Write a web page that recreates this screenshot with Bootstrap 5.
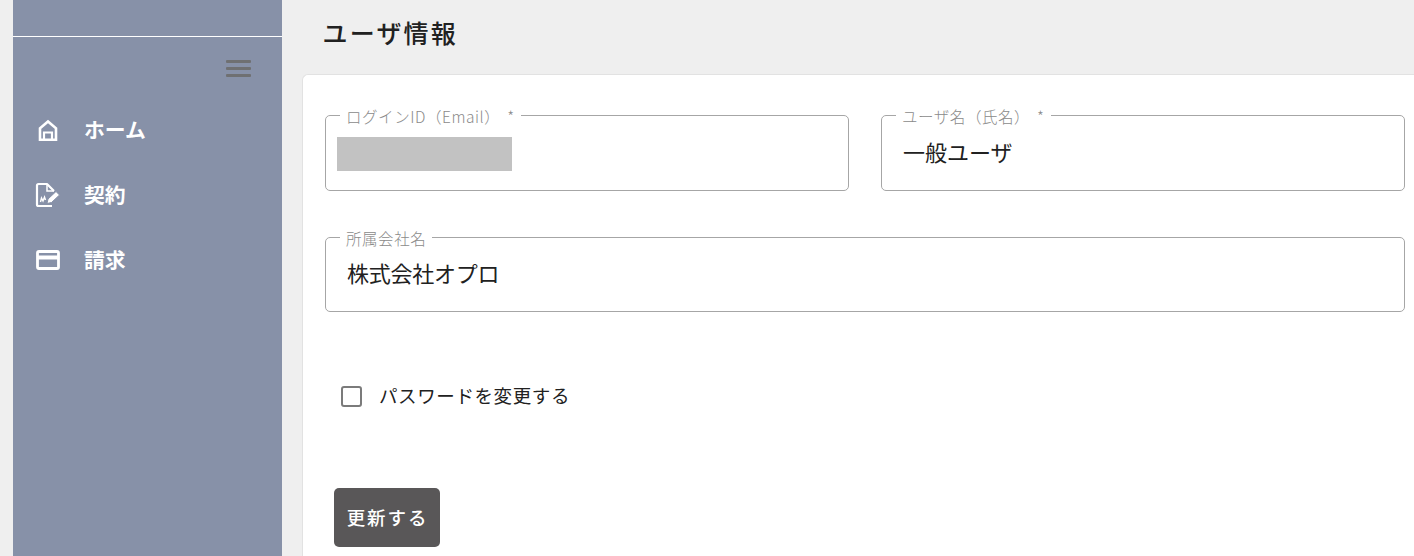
<!DOCTYPE html>
<html lang="ja">
<head>
    <meta charset="UTF-8">
    <meta name="viewport" content="width=device-width, initial-scale=1.0">
    <title>ユーザ情報</title>
    <link href="https://cdn.jsdelivr.net/npm/bootstrap@5.3.0/dist/css/bootstrap.min.css" rel="stylesheet">
    <style>
        html, body { height: 100%; overflow: hidden; }
        body {
            font-family: "Noto Sans CJK JP", "Noto Sans", sans-serif;
            background: #efefef;
            color: #212121;
        }
        .page-wrap { height: 556px; padding-left: 13px; }

        /* sidebar */
        .side-bar { width: 269px; flex: none; background: #8791a8; }
        .side-top { height: 37px; border-bottom: 1px solid #fff; }
        .side-toggle { height: 60px; padding: 23px 31px 0 0; }
        .side-toggle span { display: block; width: 25px; height: 3px; background: #6f7072; margin-bottom: 4px; border-radius: 1px; }
        .side-link { height: 65px; padding-left: 22px; color: #fff; font-weight: 700; font-size: 20.800px; text-decoration: none; }
        .side-link:hover { color: #fff; }
        .side-icon { width: 26px; height: 26px; margin-right: 23px; flex: none; }

        /* main */
        .main-area { min-width: 0; padding-left: 20px; }
        .page-title { height: 74px; margin: 0; padding: 12px 0 0 20.500px; font-size: 25px; font-weight: 500; letter-spacing: 2.200px; line-height: 40px; }
        .form-sheet { height: 500px; background: #fff; border: 1px solid #e2e2e2; border-right: 0; border-radius: 6px 0 0 0; padding: 31px 9px 0 22px; }

        .out-field { margin: 0; padding: 0 21px; border: 1px solid #a6a6a6; border-radius: 5px; min-width: 0; position: relative; }
        .out-field legend { float: none; width: auto; margin: 0 0 0 -1px; padding: 2px 6px 0 0; font-size: 15.500px; font-weight: 300; line-height: 16px; color: #8a8a8a; letter-spacing: .55px; box-shadow: -6px 0 0 #fff; }
        .out-field legend i { font-style: normal; margin-left: 7px; }
        .field-value { height: 66px; font-size: 22px; line-height: 54px; }
        .field-mask { position: absolute; left: 11px; top: 13px; width: 175px; height: 34px; background: #c2c2c2; }
        .field-row { gap: 32px; margin-bottom: 37px; }
        .field-row > * { flex: 1 1 0; }
        .field-low .field-value { height: 65px; line-height: 52px; letter-spacing: -.25px; }

        .check-line { margin: 62px 0 0 16px; font-size: 18.500px; height: 44px; letter-spacing: .6px; }
        .check-line .form-check-input[type=checkbox] { width: 21px; height: 21px; border: 2px solid #7b7b7b; border-radius: 3px; margin: 0 17px 0 0; }
        .save-btn { margin: 70px 0 0 9px; width: 106px; height: 59px; background: #595758; color: #fff; border: 0; border-radius: 5px; font-size: 18.500px; font-weight: 500; letter-spacing: 1.900px; padding: 0 0 0 1px; }
        .save-btn:hover { background: #595758; color: #fff; }
    </style>
</head>
<body>
<div class="page-wrap d-flex">
    <aside class="side-bar">
        <div class="side-top"></div>
        <div class="side-toggle d-flex flex-column align-items-end">
            <span></span><span></span><span></span>
        </div>
        <nav class="d-flex flex-column">
            <a class="side-link d-flex align-items-center" href="#">
                <svg class="side-icon" viewBox="0 0 26 26" fill="none" stroke="#fff" stroke-width="2.600">
                    <path d="M5 22.700V11.300L13 4.500l8 6.800v11.400z" stroke-linejoin="miter"/>
                    <path d="M9 22.700V15.500h8v7.200" stroke-width="2.200"/>
                </svg>
                ホーム
            </a>
            <a class="side-link d-flex align-items-center" href="#">
                <svg class="side-icon" viewBox="0 0 26 26" fill="none" stroke="#fff" stroke-width="2.200">
                    <path d="M17 24H3.500a1.500 1.500 0 0 1-1.500-1.500V3.500A1.500 1.500 0 0 1 3.500 2H12l7 7" stroke-linejoin="round"/>
                    <path d="M12 2v7h7" stroke-width="1.500"/>
                    <path d="M5.500 20l1-4 1.500 3 1.500-4 1 3" stroke-width="1.400"/>
                    <path d="M12 21.500l1-4.500 8-7.500 3.500 3.500-8 7.500z" fill="#fff" stroke="#8791a8" stroke-width="1"/>
                </svg>
                契約
            </a>
            <a class="side-link d-flex align-items-center" href="#">
                <svg class="side-icon" viewBox="0 0 26 26" fill="none">
                    <rect x="2.500" y="4.500" width="21" height="17" rx="1.500" stroke="#fff" stroke-width="2.800"/>
                    <rect x="2.500" y="8.500" width="21" height="4" fill="#fff"/>
                </svg>
                請求
            </a>
        </nav>
    </aside>
    <main class="main-area flex-grow-1">
        <h1 class="page-title">ユーザ情報</h1>
        <div class="form-sheet">
            <div class="d-flex field-row">
                <fieldset class="out-field">
                    <legend>ログインID（Email）<i>*</i></legend>
                    <div class="field-mask"></div>
                    <div class="field-value"></div>
                </fieldset>
                <fieldset class="out-field">
                    <legend>ユーザ名（氏名）<i>*</i></legend>
                    <div class="field-value">一般ユーザ</div>
                </fieldset>
            </div>
            <fieldset class="out-field field-low">
                <legend>所属会社名</legend>
                <div class="field-value">株式会社オプロ</div>
            </fieldset>
            <div class="check-line d-flex align-items-center">
                <input type="checkbox" class="form-check-input" id="pw">
                <label for="pw">パスワードを変更する</label>
            </div>
            <button type="button" class="btn save-btn">更新する</button>
        </div>
    </main>
</div>
<script src="https://cdn.jsdelivr.net/npm/bootstrap@5.3.0/dist/js/bootstrap.bundle.min.js"></script>
</body>
</html>
